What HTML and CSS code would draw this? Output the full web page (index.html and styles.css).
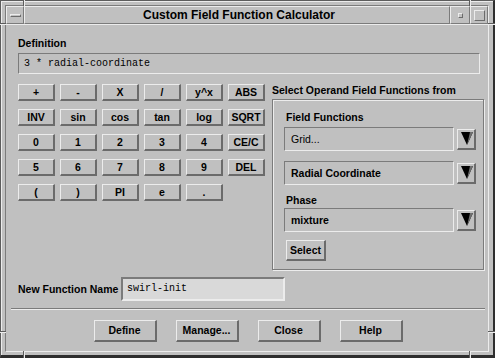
FILE: index.html
```html
<!DOCTYPE html>
<html>
<head>
<meta charset="utf-8">
<link rel="stylesheet" href="styles.css">
</head>
<body>
<div class="window">
  <div class="frame">
    <div class="titlebar">
      <div class="tb-piece tb-menu"><span class="menu-glyph"></span></div>
      <div class="tb-piece tb-title">Custom Field Function Calculator</div>
      <div class="tb-piece tb-min"><span class="min-glyph"></span></div>
      <div class="tb-piece tb-max"><span class="max-glyph"></span></div>
    </div>
    <div class="client">
      <div class="label">Definition</div>
      <div class="def-field">3 * radial-coordinate</div>
      <div class="calc-row">
        <div class="keypad">
          <button class="btn">+</button><button class="btn">-</button><button class="btn">X</button><button class="btn">/</button><button class="btn">y^x</button><button class="btn">ABS</button>
          <button class="btn">INV</button><button class="btn">sin</button><button class="btn">cos</button><button class="btn">tan</button><button class="btn">log</button><button class="btn">SQRT</button>
          <button class="btn">0</button><button class="btn">1</button><button class="btn">2</button><button class="btn">3</button><button class="btn">4</button><button class="btn">CE/C</button>
          <button class="btn">5</button><button class="btn">6</button><button class="btn">7</button><button class="btn">8</button><button class="btn">9</button><button class="btn">DEL</button>
          <button class="btn">(</button><button class="btn">)</button><button class="btn">PI</button><button class="btn">e</button><button class="btn">.</button>
        </div>
        <div class="operand">
          <div class="label">Select Operand Field Functions from</div>
          <div class="group">
            <div class="label g-label">Field Functions</div>
            <div class="combo-row first">
              <div class="combo plain">Grid...</div>
              <button class="arrow-btn"><svg width="12" height="13" viewBox="0 0 12 13"><polygon points="0,0 12,0 6,13" fill="#000"/><polygon points="12,0 9,0 6,13" fill="#6e6e6e"/></svg></button>
            </div>
            <div class="combo-row second">
              <div class="combo">Radial Coordinate</div>
              <button class="arrow-btn"><svg width="12" height="13" viewBox="0 0 12 13"><polygon points="0,0 12,0 6,13" fill="#000"/><polygon points="12,0 9,0 6,13" fill="#6e6e6e"/></svg></button>
            </div>
            <div class="label g-label phase">Phase</div>
            <div class="combo-row third">
              <div class="combo">mixture</div>
              <button class="arrow-btn"><svg width="12" height="13" viewBox="0 0 12 13"><polygon points="0,0 12,0 6,13" fill="#000"/><polygon points="12,0 9,0 6,13" fill="#6e6e6e"/></svg></button>
            </div>
            <button class="btn select-btn">Select</button>
          </div>
        </div>
      </div>
      <div class="name-row">
        <div class="label name-label">New Function Name</div>
        <div class="name-field">swirl-init</div>
      </div>
      <div class="sep"></div>
      <div class="actions">
        <button class="btn action">Define</button>
        <button class="btn action">Manage...</button>
        <button class="btn action">Close</button>
        <button class="btn action">Help</button>
      </div>
    </div>
  </div>
  <span class="notch v top-l"></span>
  <span class="notch v top-r"></span>
  <span class="notch v bot-l"></span>
  <span class="notch v bot-r"></span>
  <span class="notch h left-t"></span>
  <span class="notch h right-t"></span>
  <span class="notch h left-b"></span>
  <span class="notch h right-b"></span>
</div>
</body>
</html>
```

FILE: styles.css
```css
* { box-sizing: border-box; }

body {
  margin: 0;
  background: #c0c0c0;
  font-family: "Liberation Sans", Arial, sans-serif;
  color: #000;
}

.window {
  position: relative;
  width: 495px;
  height: 358px;
  background: #c0c0c0;
  border-style: solid;
  border-width: 1px 2px 3px 1px;
  border-color: #5c5c5c #2e2e2e #2e2e2e #5c5c5c;
  box-shadow: inset 1px 1px #ececec;
  padding: 4px 4px 3px 4px;
}

.frame {
  height: 100%;
  border: 1px solid;
  border-color: #7b7b7b #ececec #ececec #7b7b7b;
  display: flex;
  flex-direction: column;
}

.titlebar {
  display: flex;
  height: 18px;
  flex-shrink: 0;
}

.tb-piece {
  border: 1px solid;
  border-color: #ececec #7b7b7b #7b7b7b #ececec;
  display: flex;
  align-items: center;
  justify-content: center;
}

.tb-menu { width: 18px; }
.tb-title {
  flex: 1;
  font-weight: bold;
  font-size: 12px;
  padding-left: 4px;
}
.tb-min { width: 20px; }
.tb-max { width: 18px; }

.menu-glyph {
  width: 11px;
  height: 3px;
  border: 1px solid;
  border-color: #ececec #6b6b6b #6b6b6b #ececec;
}
.min-glyph {
  width: 5px;
  height: 5px;
  border: 1px solid;
  border-color: #ececec #6b6b6b #6b6b6b #ececec;
}
.max-glyph {
  width: 11px;
  height: 11px;
  border: 1px solid;
  border-color: #ececec #6b6b6b #6b6b6b #ececec;
}

.client {
  flex: 1;
  border-top: 1px solid #ececec;
  padding: 12px 4px 0 12px;
}

.label {
  font-weight: bold;
  font-size: 10.5px;
  line-height: 13px;
  white-space: nowrap;
}

.def-field {
  margin-top: 3px;
  margin-right: 4px;
  height: 21px;
  border: 1px solid;
  border-color: #7b7b7b #ececec #ececec #7b7b7b;
  padding-left: 5px;
  font-family: "Liberation Mono", "DejaVu Sans Mono", monospace;
  font-size: 10px;
  line-height: 19px;
}

.calc-row {
  display: flex;
  gap: 7px;
  margin-top: 10px;
  align-items: flex-start;
}

.keypad {
  display: grid;
  grid-template-columns: repeat(6, 37px);
  grid-auto-rows: 17px;
  column-gap: 5px;
  row-gap: 8px;
  flex-shrink: 0;
}

.btn {
  margin: 0;
  padding: 0;
  border-style: solid;
  border-width: 1px 2px 2px 1px;
  border-color: #ececec #6b6b6b #6b6b6b #ececec;
  background: #c0c0c0;
  color: #000;
  font-family: "Liberation Sans", Arial, sans-serif;
  font-weight: bold;
  font-size: 10.5px;
  line-height: 1;
  display: flex;
  align-items: center;
  justify-content: center;
  white-space: nowrap;
}

.operand {
  width: 212px;
  flex-shrink: 0;
}

.group {
  margin-top: 2px;
  height: 171px;
  border: 1px solid #7b7b7b;
  box-shadow: inset 1px 1px #ececec, 1px 1px #ececec;
  padding: 11px 0 8px 0;
}

.g-label { margin-left: 13px; }

.combo-row {
  display: flex;
  align-items: center;
  gap: 3px;
  margin-left: 11px;
}
.combo-row.first { margin-top: 3px; }
.combo-row.second { margin-top: 10px; }
.phase { margin-top: 9px; }
.combo-row.third { margin-top: 1px; }

.combo {
  width: 170px;
  height: 24px;
  border: 1px solid;
  border-color: #7b7b7b #ececec #ececec #7b7b7b;
  padding-left: 6px;
  display: flex;
  align-items: center;
  font-weight: bold;
  font-size: 10.5px;
}
.combo.plain { font-weight: normal; }

.arrow-btn {
  margin: 0;
  padding: 0 0 0 1px;
  width: 19px;
  height: 21px;
  border-style: solid;
  border-width: 1px 2px 2px 1px;
  border-color: #ececec #6b6b6b #6b6b6b #ececec;
  background: #c0c0c0;
  display: flex;
  align-items: center;
  justify-content: center;
}
.arrow-btn svg { display: block; }

.select-btn {
  margin: 8px 0 0 13px;
  width: 40px;
  height: 21px;
}

.name-row {
  display: flex;
  align-items: center;
  margin-top: 7px;
  height: 24px;
}
.name-label { width: 103px; }
.name-field {
  width: 164px;
  height: 24px;
  border: 2px solid;
  border-color: #7b7b7b #ececec #ececec #7b7b7b;
  background: #d9d9d9;
  padding-left: 4px;
  font-family: "Liberation Mono", "DejaVu Sans Mono", monospace;
  font-size: 10px;
  line-height: 20px;
}

.sep {
  margin: 7px -1px 0 -7px;
  height: 2px;
  border-top: 1px solid #7b7b7b;
  border-bottom: 1px solid #ececec;
}

.actions {
  display: flex;
  justify-content: center;
  gap: 19px;
  margin: 10px 6px 0 0;
}
.action {
  width: 63px;
  height: 22px;
}

.notch { position: absolute; display: block; }
.notch.v {
  width: 2px;
  border-left: 1px solid #5c5c5c;
  border-right: 1px solid #ececec;
}
.notch.h {
  height: 2px;
  border-top: 1px solid #5c5c5c;
  border-bottom: 1px solid #ececec;
}
.top-l { left: 22px; top: -1px; height: 6px; }
.top-r { left: 468px; top: -1px; height: 6px; }
.bot-l { left: 22px; top: 350px; height: 7px; }
.bot-r { left: 468px; top: 350px; height: 7px; }
.left-t { left: -1px; top: 22px; width: 6px; }
.right-t { left: 487px; top: 22px; width: 7px; }
.left-b { left: -1px; top: 330px; width: 6px; }
.right-b { left: 487px; top: 330px; width: 7px; }
```
